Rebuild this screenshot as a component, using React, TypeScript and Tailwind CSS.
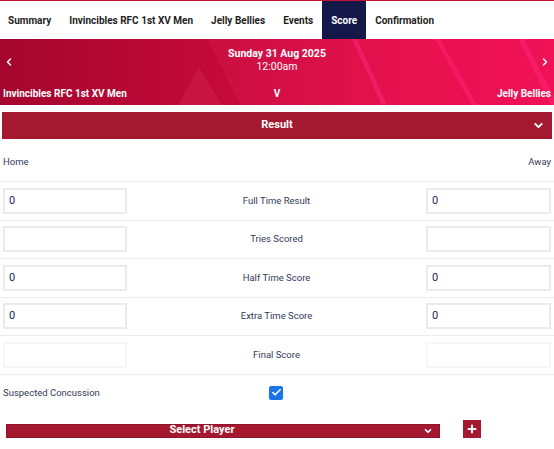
import { ChevronDown, ChevronLeft, ChevronRight, Check, Plus } from "lucide-react"

const tabs = ["Summary", "Invincibles RFC 1st XV Men", "Jelly Bellies", "Events", "Score", "Confirmation"]

const rows = [
  { label: "Full Time Result", home: "0", away: "0" },
  { label: "Tries Scored", home: "", away: "" },
  { label: "Half Time Score", home: "0", away: "0" },
  { label: "Extra Time Score", home: "0", away: "0" },
  { label: "Final Score", home: "", away: "", disabled: true },
]

function HeaderBackdrop() {
  return (
    <svg className="absolute inset-0" width="554" height="66" viewBox="0 0 554 66" preserveAspectRatio="none">
      <defs>
        <linearGradient id="hdr" x1="0" y1="0" x2="1" y2="0">
          <stop offset="0" stopColor="#a4062d" />
          <stop offset="0.4" stopColor="#c40a3a" />
          <stop offset="0.7" stopColor="#e20c48" />
          <stop offset="1" stopColor="#ee0c52" />
        </linearGradient>
      </defs>
      <rect width="554" height="66" fill="url(#hdr)" />
      <polygon points="207,0 554,0 554,66 240,66" fill="#ff3a7a" opacity="0.12" />
      <polygon points="178,66 199,28 222,66" fill="#ff6a8a" opacity="0.12" />
      <polygon points="352,0 357,0 387,66 382,66" fill="#ff2a80" opacity="0.45" />
      <polygon points="435,0 440,0 477,66 472,66" fill="#ff2a80" opacity="0.4" />
      <polygon points="518,0 524,0 554,58 554,66 551,66" fill="#ff2a80" opacity="0.4" />
    </svg>
  )
}

export default function App() {
  return (
    <div className="w-[554px] h-[449px] overflow-hidden bg-white font-['Roboto',sans-serif] text-[#343a58]">
      <nav className="h-[39px] border-t border-[#c8102e] flex items-stretch text-[10px] font-bold text-[#1d1d1d]">
        {tabs.map((t, i) => (
          <div
            key={t}
            className={`flex items-center ${i === 0 ? "pl-[8px] pr-[9px]" : "px-[9px]"} ${
              t === "Score" ? "bg-[#131849] text-white" : ""
            }`}
          >
            {t}
          </div>
        ))}
      </nav>

      <header className="relative h-[66px] text-white">
        <HeaderBackdrop />
        <div className="relative h-full flex flex-col">
          <div className="flex items-center justify-between pt-[8px] px-[3px]">
            <ChevronLeft size={12} strokeWidth={3} className="mt-[4px]" />
            <div className="text-center leading-[13px]">
              <div className="text-[10.5px] font-bold">Sunday 31 Aug 2025</div>
              <div className="text-[10.5px]">12:00am</div>
            </div>
            <ChevronRight size={12} strokeWidth={3} className="mt-[4px]" />
          </div>
          <div className="mt-auto pb-[4px] px-[3px] grid grid-cols-3 text-[10px] font-bold leading-[14px]">
            <span className="whitespace-nowrap">Invincibles RFC 1st XV Men</span>
            <span className="text-center">V</span>
            <span className="text-right">Jelly Bellies</span>
          </div>
        </div>
      </header>

      <div className="px-[2px] pt-[7px]">
        <div className="h-[27px] bg-[#a51930] text-white text-[11px] font-bold flex items-center justify-center relative">
          Result
          <ChevronDown size={13} strokeWidth={3.5} className="absolute right-[7px]" />
        </div>
      </div>

      <div className="flex justify-between px-[3px] pt-[17px] pb-[13px] text-[9.5px] leading-[12px]">
        <span>Home</span>
        <span>Away</span>
      </div>

      <div className="border-t border-[#ececec]">
        {rows.map((r) => (
          <div key={r.label} className="h-[38.5px] border-b border-[#ececec] flex items-center justify-between px-[3px]">
            <div
              className={`w-[124px] h-[26px] border-2 ${
                r.disabled ? "border-[#f6f6f6]" : "border-[#ebebeb]"
              } flex items-center px-[4px] text-[11px] text-[#1c2858]`}
            >
              {r.home}
            </div>
            <span className="text-[9.5px]">{r.label}</span>
            <div
              className={`w-[125px] h-[26px] border-2 ${
                r.disabled ? "border-[#f6f6f6]" : "border-[#ebebeb]"
              } flex items-center px-[4px] text-[11px] text-[#1c2858]`}
            >
              {r.away}
            </div>
          </div>
        ))}
      </div>

      <div className="h-[37px] flex items-center px-[3px] relative">
        <span className="text-[9.5px]">Suspected Concussion</span>
        <div className="absolute left-[269px] top-[11px] w-[14px] h-[14px] rounded-[2px] bg-[#1a73e8] flex items-center justify-center">
          <Check size={11} strokeWidth={3.5} className="text-white" />
        </div>
      </div>

      <div className="flex items-end pl-[6px] pt-[8px]">
        <div className="w-[434px] h-[14px] bg-[#a51930] border border-[#8f1428] text-white text-[11px] font-bold flex items-center justify-center pr-[42px] relative">
          Select Player
          <ChevronDown size={10} strokeWidth={4} className="absolute right-[6px]" />
        </div>
        <div className="ml-[23px] w-[18px] h-[18px] bg-[#a51930] flex items-center justify-center">
          <Plus size={12} strokeWidth={4} className="text-white" />
        </div>
      </div>
    </div>
  )
}
